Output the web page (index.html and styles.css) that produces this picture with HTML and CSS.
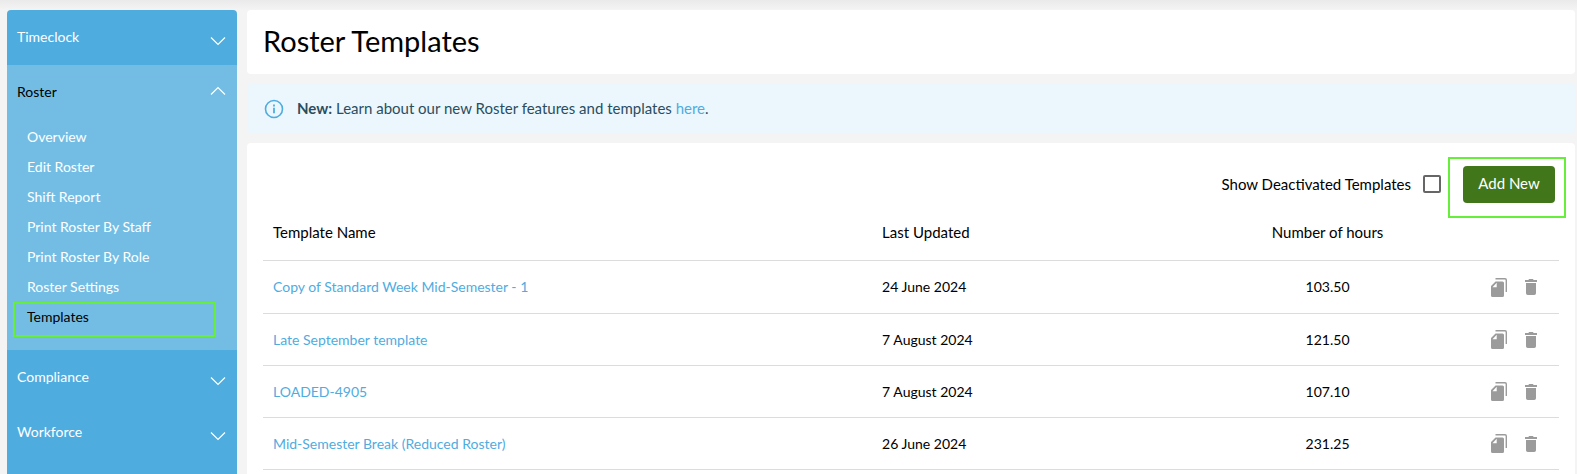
FILE: index.html
```html
<!DOCTYPE html>
<html lang="en">
<head>
    <meta charset="UTF-8">
    <meta name="viewport" content="width=device-width, initial-scale=1.0">
    <title>Roster Templates</title>
    <link rel="stylesheet" href="styles.css">
</head>
<body>

    <!-- Shared icons -->
    <svg class="sprite" aria-hidden="true">
        <symbol id="icon-chevron" viewBox="0 0 16 10">
            <path d="M1 1.5l7 7 7-7" fill="none" stroke="currentColor" stroke-width="1.2"/>
        </symbol>
        <symbol id="icon-copy" viewBox="0 0 16 19">
            <path d="M4.500 0.700h9.500a1.300 1.300 0 0 1 1.300 1.300v12" fill="none" stroke="currentColor" stroke-width="1.400"/>
            <path fill-rule="evenodd" d="M4.500 3.500h7A1.500 1.500 0 0 1 13 5v12.500A1.500 1.500 0 0 1 11.500 19h-10A1.500 1.500 0 0 1 0 17.500V8zM5.700 4.700L1.500 9.200h4.200z" fill="currentColor"/>
        </symbol>
        <symbol id="icon-trash" viewBox="0 0 12 16">
            <path d="M1 4h10v10.200A1.800 1.800 0 0 1 9.200 16H2.800A1.800 1.800 0 0 1 1 14.200zM0 1h3.300l.8-1h3.800l.8 1H12v2H0z" fill="currentColor"/>
        </symbol>
    </svg>

    <div class="layout">
        <!-- Sidebar -->
        <nav class="sidebar">
            <button type="button" class="menu-head">Timeclock <svg class="chevron"><use href="#icon-chevron"/></svg></button>

            <div class="menu-open">
                <button type="button" class="menu-head">Roster <svg class="chevron up"><use href="#icon-chevron"/></svg></button>
                <ul class="submenu">
                    <li><a href="#">Overview</a></li>
                    <li><a href="#">Edit Roster</a></li>
                    <li><a href="#">Shift Report</a></li>
                    <li><a href="#">Print Roster By Staff</a></li>
                    <li><a href="#">Print Roster By Role</a></li>
                    <li><a href="#">Roster Settings</a></li>
                    <li class="marked"><a href="#" class="active">Templates</a></li>
                </ul>
            </div>

            <button type="button" class="menu-head">Compliance <svg class="chevron"><use href="#icon-chevron"/></svg></button>
            <button type="button" class="menu-head">Workforce <svg class="chevron"><use href="#icon-chevron"/></svg></button>
        </nav>

        <!-- Content -->
        <main class="content">
            <header class="title-card">
                <h1>Roster Templates</h1>
            </header>

            <div class="notice">
                <svg class="info" viewBox="0 0 20 20">
                    <circle cx="10" cy="10" r="8.500" fill="none" stroke="currentColor" stroke-width="1.600"/>
                    <path d="M10 8.800v5.400M10 5.600v1.800" stroke="currentColor" stroke-width="1.800"/>
                </svg>
                <p><strong>New:</strong> Learn about our new Roster features and templates <a href="#">here</a>.</p>
            </div>

            <section class="card">
                <div class="toolbar">
                    <label for="show-deactivated">Show Deactivated Templates</label>
                    <input type="checkbox" id="show-deactivated">
                    <div class="add-wrap">
                        <button type="button" class="add-btn">Add New</button>
                    </div>
                </div>

                <table class="templates">
                    <thead>
                        <tr>
                            <th class="name">Template Name</th>
                            <th class="updated">Last Updated</th>
                            <th class="hours">Number of hours</th>
                            <th class="actions"></th>
                        </tr>
                    </thead>
                    <tbody>
                        <tr>
                            <td><a href="#">Copy of Standard Week Mid-Semester - 1</a></td>
                            <td>24 June 2024</td>
                            <td class="hours">103.50</td>
                            <td class="actions">
                                <div class="icons">
                                    <button type="button" aria-label="Copy"><svg class="copy"><use href="#icon-copy"/></svg></button>
                                    <button type="button" aria-label="Delete"><svg class="trash"><use href="#icon-trash"/></svg></button>
                                </div>
                            </td>
                        </tr>
                        <tr>
                            <td><a href="#">Late September template</a></td>
                            <td>7 August 2024</td>
                            <td class="hours">121.50</td>
                            <td class="actions">
                                <div class="icons">
                                    <button type="button" aria-label="Copy"><svg class="copy"><use href="#icon-copy"/></svg></button>
                                    <button type="button" aria-label="Delete"><svg class="trash"><use href="#icon-trash"/></svg></button>
                                </div>
                            </td>
                        </tr>
                        <tr>
                            <td><a href="#">LOADED-4905</a></td>
                            <td>7 August 2024</td>
                            <td class="hours">107.10</td>
                            <td class="actions">
                                <div class="icons">
                                    <button type="button" aria-label="Copy"><svg class="copy"><use href="#icon-copy"/></svg></button>
                                    <button type="button" aria-label="Delete"><svg class="trash"><use href="#icon-trash"/></svg></button>
                                </div>
                            </td>
                        </tr>
                        <tr>
                            <td><a href="#">Mid-Semester Break (Reduced Roster)</a></td>
                            <td>26 June 2024</td>
                            <td class="hours">231.25</td>
                            <td class="actions">
                                <div class="icons">
                                    <button type="button" aria-label="Copy"><svg class="copy"><use href="#icon-copy"/></svg></button>
                                    <button type="button" aria-label="Delete"><svg class="trash"><use href="#icon-trash"/></svg></button>
                                </div>
                            </td>
                        </tr>
                    </tbody>
                </table>
            </section>
        </main>
    </div>

</body>
</html>
```

FILE: styles.css
```css
* {
    box-sizing: border-box;
}
body {
    margin: 0;
    background: linear-gradient(#eaeaea, #f4f4f4 10px) no-repeat #f4f4f4;
    font-family: Avenir, Lato, sans-serif;
    font-size: 15px;
    line-height: 20px;
    color: #000;
}
a {
    color: #4facdf;
    text-decoration: none;
}
button {
    font: inherit;
    border: none;
    cursor: pointer;
}
.sprite {
    display: none;
}
.layout {
    display: flex;
    gap: 10px;
    min-height: 100vh;
    padding: 10px 2px 0 7px;
}

/* Sidebar */
.sidebar {
    flex: 0 0 230px;
    background: #4facdf;
    border-radius: 4px 4px 0 0;
    font-size: 14px;
}
.menu-head {
    display: flex;
    justify-content: space-between;
    align-items: center;
    width: 100%;
    height: 55px;
    padding: 0 11px 2px 10px;
    background: none;
    color: #fff;
}
.chevron {
    width: 16px;
    height: 10px;
    margin-top: 8px;
    color: #fff;
}
.chevron.up {
    margin: 0 0 2px;
    transform: rotate(180deg);
}
.menu-open {
    background: #73bde4;
    padding-bottom: 18px;
}
.menu-open .menu-head {
    color: #000;
}
.submenu {
    list-style: none;
    margin: 0;
    padding: 2px 0 0;
}
.submenu li {
    position: relative;
    height: 30px;
    padding: 5px 20px;
}
.submenu a {
    color: #fff;
}
.submenu a.active {
    color: #000;
}
.submenu .marked::after {
    content: "";
    box-sizing: border-box;
    position: absolute;
    top: 0;
    left: 6px;
    right: 21px;
    height: 35px;
    border: 2px solid #67ee3a;
    pointer-events: none;
}

/* Content */
.content {
    flex: 1;
    min-width: 0;
    display: flex;
    flex-direction: column;
    gap: 10px;
}
.title-card {
    padding: 13px 16px 15px;
    background: #fff;
    border-radius: 4px;
}
h1 {
    margin: 0;
    font-size: 29px;
    font-weight: 400;
    line-height: 36px;
}
.notice {
    display: flex;
    align-items: center;
    gap: 13px;
    height: 49px;
    padding: 0 17px;
    background: #ebf7fd;
    border-radius: 4px;
    color: #2b4d5e;
}
.notice p {
    margin: 0 0 2px;
}
.info {
    width: 20px;
    height: 20px;
    color: #4facdf;
}
.card {
    flex: 1;
    padding: 14px 16px 0;
    background: #fff;
    border-radius: 4px 4px 0 0;
}
.toolbar {
    display: flex;
    justify-content: flex-end;
    align-items: flex-start;
    margin-right: -7px;
}
.toolbar label {
    margin-top: 17px;
}
.toolbar input {
    appearance: none;
    width: 18px;
    height: 18px;
    margin: 18px 7px 0 12px;
    border: 2px solid #666;
    border-radius: 2px;
}
.add-wrap {
    height: 61px;
    padding: 7px 9px 0 13px;
    border: 2px solid #67ee3a;
}
.add-btn {
    width: 92px;
    height: 37px;
    padding: 0 0 3px;
    background: #41771a;
    border-radius: 4px;
    color: #fff;
}

/* Table */
.templates {
    width: 100%;
    table-layout: fixed;
    border-collapse: separate;
    border-spacing: 0;
}
.templates th,
.templates td {
    height: 52px;
    padding: 0 10px;
    border-bottom: 1px solid #dcdcdc;
    text-align: left;
    font-weight: 400;
}
.templates th {
    height: 43px;
    padding-bottom: 14px;
}
.templates td {
    font-size: 14px;
}
.templates tbody tr:first-child td {
    height: 53px;
}
.templates .name {
    width: 47%;
}
.templates .updated {
    width: 25%;
}
.templates .hours {
    text-align: center;
}
.templates .actions {
    width: 100px;
}
.icons {
    display: flex;
    justify-content: flex-end;
    align-items: center;
    gap: 18px;
    padding-right: 12px;
}
.icons button {
    display: flex;
    padding: 0;
    background: none;
    color: #9b9b9b;
}
.copy {
    width: 16px;
    height: 19px;
}
.trash {
    width: 12px;
    height: 16px;
}
```
